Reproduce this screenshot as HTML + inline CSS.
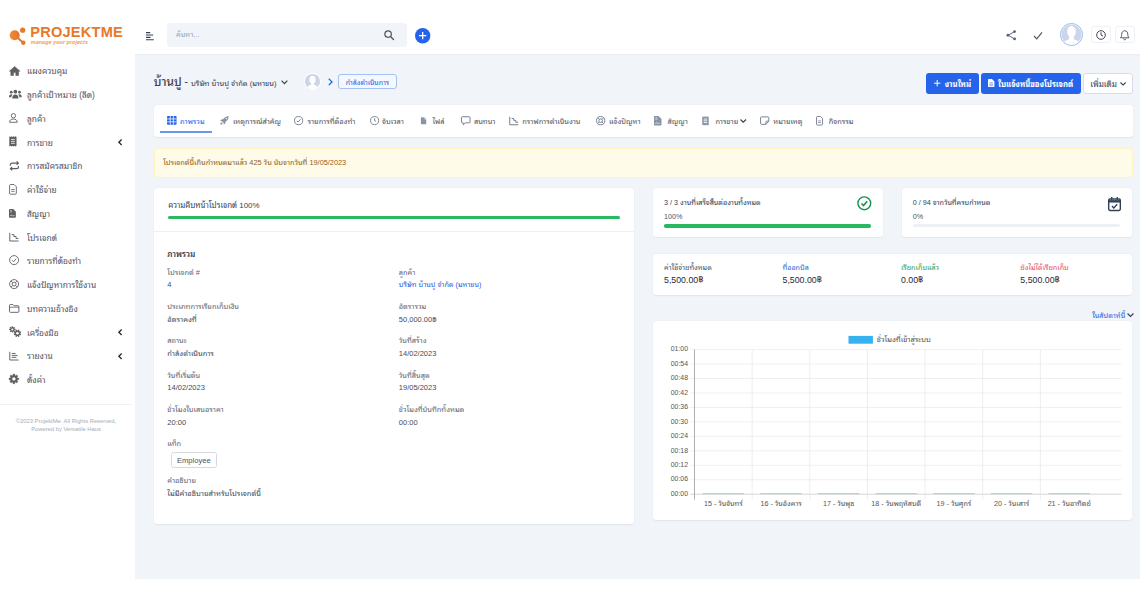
<!DOCTYPE html>
<html lang="th">
<head>
<meta charset="utf-8">
<title>ProjektMe - บ้านปู</title>
<style>
*{box-sizing:border-box;margin:0;padding:0}
html,body{width:1140px;height:597px;overflow:hidden;background:#fff}
body{font-family:"Liberation Sans","Noto Sans Thai Looped","Loma",sans-serif;font-size:7.6px;color:#334155;position:relative;line-height:1}
.abs{position:absolute}
.t{position:absolute;white-space:nowrap;line-height:1;transform:translateY(-50%)}
svg{position:absolute;overflow:visible}
#header{left:135px;top:0;width:1005px;height:54.2px;background:#fff;box-shadow:0 .5px 1.500px rgba(100,116,139,.12)}
#sidebar{left:0;top:0;width:135px;height:597px;background:#fff}
.card{position:absolute;background:#fff;border-radius:3.5px;box-shadow:0 .5px 1.5px rgba(15,23,42,.07)}
.mi{font-size:8.4px;color:#52525b;left:27px}
.lbl{color:#5f6776;font-size:7.4px}
.val{color:#454b57;font-size:7.5px}
.tab{font-size:7.4px;color:#475569}
.ax{font-size:6.9px;color:#555;font-family:"Liberation Sans","Noto Sans Thai Looped","Loma",sans-serif}
</style>
</head>
<body>
<div class="abs" style="left:135px;top:54px;width:1005px;height:524.5px;background:#f1f5f9"></div>
<div id="header" class="abs"></div>
<div id="sidebar" class="abs"></div>

<!-- LOGO -->
<svg style="left:9px;top:26.5px" width="18" height="19" viewBox="0 0 18 19">
  <defs><linearGradient id="lg" x1="0" y1="0" x2="1" y2="0"><stop offset="0" stop-color="#f08c38"/><stop offset="1" stop-color="#e4722a"/></linearGradient></defs>
  <path d="M8.200 10.300L13.600 15.200" stroke="#e8782a" stroke-width="2" stroke-linecap="round"/>
  <circle cx="5.700" cy="8.200" r="5" fill="url(#lg)"/>
  <circle cx="13.700" cy="3.200" r="2.600" fill="#e8782a"/>
  <circle cx="14.300" cy="15.800" r="2.200" fill="#e8782a"/>
</svg>
<div class="t" style="left:30.3px;top:32.100px;font-size:14.6px;font-weight:bold;color:#e8782a;letter-spacing:.2px">PROJEKTME</div>
<div class="t" style="left:30.8px;top:42.800px;font-size:5.5px;font-weight:bold;font-style:italic;color:#f0a060">manage your projects</div>

<!-- SIDEBAR MENU -->
<svg style="left:8.70px;top:65.60px" width="11.37" height="9.80" viewBox="0 0 11.6 10"><path d="M5.800 .5L.3 5.300h1.500v4.400h2.900V6.700h2.200v3h2.900V5.300h1.500z" fill="#5e5e64" stroke="#5e5e64" stroke-width=".5" stroke-linejoin="round"/></svg><div class="t mi" style="top:71.40px">แผงควบคุม</div><svg style="left:8.70px;top:89.35px" width="12.74" height="9.80" viewBox="0 0 13 10"><circle cx="6.500" cy="2.700" r="1.900" fill="#5e5e64"/><circle cx="2.300" cy="3.300" r="1.400" fill="#5e5e64"/><circle cx="10.700" cy="3.300" r="1.400" fill="#5e5e64"/><path d="M3.300 9.700c0-2.600 1.300-4 3.200-4s3.200 1.400 3.200 4z" fill="#5e5e64"/><path d="M0 8.300c0-1.900 .9-3 2.200-3 .6 0 1.100 .2 1.500 .6-.9 .7-1.300 1.500-1.400 2.400z" fill="#5e5e64"/><path d="M13 8.300c0-1.900-.9-3-2.200-3-.6 0-1.100 .2-1.500 .6 .9 .7 1.300 1.500 1.400 2.400z" fill="#5e5e64"/></svg><div class="t mi" style="top:95.15px">ลูกค้าเป้าหมาย (ลีด)</div><svg style="left:9.20px;top:113.10px" width="8.82" height="9.80" viewBox="0 0 9 10"><circle cx="4.500" cy="2.800" r="2.200" fill="none" stroke="#5e5e64" stroke-width=".9"/><path d="M.6 9.500c0-2.300 1.500-3.300 3.900-3.300s3.900 1 3.900 3.300z" fill="none" stroke="#5e5e64" stroke-width=".9" stroke-linejoin="round"/></svg><div class="t mi" style="top:118.90px">ลูกค้า</div><svg style="left:9.30px;top:136.36px" width="7.84" height="10.78" viewBox="0 0 8 11"><path d="M.3 .2l1.050 .8 1.050-.8 1.050 .8L4.500 .2l1.050 .8L6.600 .2l1.100 .8v9l-1.100 .8-1.050-.8-1.050 .8-1.050-.8-1.050 .8-1.050-.8L.3 10.800z" fill="#5e5e64"/><path d="M2 3.500h4M2 5.500h4M2 7.500h4" stroke="#fff" stroke-width=".8"/></svg><div class="t mi" style="top:142.65px">การขาย</div><svg style="left:118.4px;top:139.15px" width="4.400" height="6.600" viewBox="0 0 4 6"><path d="M3.300 .5L.8 3l2.500 2.500" fill="none" stroke="#27272a" stroke-width="1.200"/></svg><svg style="left:8.70px;top:160.60px" width="10.78" height="9.80" viewBox="0 0 11 10"><path d="M1.300 4.800V4.200c0-1.100 .9-2 2-2h6M7.800 .4l1.800 1.800-1.800 1.800" fill="none" stroke="#5e5e64" stroke-width="1.150"/><path d="M9.700 5.200v.6c0 1.100-.9 2-2 2h-6M3.200 9.600L1.400 7.800l1.800-1.800" fill="none" stroke="#5e5e64" stroke-width="1.150"/></svg><div class="t mi" style="top:166.40px">การสมัครสมาชิก</div><svg style="left:9.30px;top:183.86px" width="7.84" height="10.78" viewBox="0 0 8 11"><path d="M1.500 .5h3.700l2.300 2.300v6.700c0 .5-.4 .9-.9 .9H1.500c-.5 0-.9-.4-.9-.9V1.400c0-.5 .4-.9 .9-.9z" fill="none" stroke="#5e5e64" stroke-width=".9"/><path d="M2.400 5.600h3.300M2.400 7.500h3.300" stroke="#5e5e64" stroke-width=".85"/></svg><div class="t mi" style="top:190.15px">ค่าใช้จ่าย</div><svg style="left:9.40px;top:208.59px" width="6.86" height="8.82" viewBox="0 0 7 9"><path d="M.8 0h3.400l2.800 2.800v5.400c0 .4-.4 .8-.8 .8H.8C.4 9 0 8.600 0 8.200V.8C0 .4 .4 0 .8 0z" fill="#5e5e64"/><path d="M1.300 1.700h1.800M1.300 3h1.800" stroke="#fff" stroke-width=".6"/><path d="M1.300 7.200c.7-1.500 1.100-1.500 1.500-.4 .3 .7 .7 .4 1.100 0l1.700 0" fill="none" stroke="#fff" stroke-width=".6"/></svg><div class="t mi" style="top:213.90px">สัญญา</div><svg style="left:8.70px;top:231.85px" width="9.80" height="9.80" viewBox="0 0 10 10"><path d="M.8 .8v8.400h9" fill="none" stroke="#5e5e64" stroke-width=".95"/><path d="M2.800 2.600h2.200v2h2.200v2h2.400" fill="none" stroke="#5e5e64" stroke-width=".95"/></svg><div class="t mi" style="top:237.65px">โปรเจกต์</div><svg style="left:8.70px;top:255.40px" width="10.19" height="10.19" viewBox="0 0 10.4 10.4"><circle cx="5.200" cy="5.200" r="4.600" fill="none" stroke="#5e5e64" stroke-width=".9"/><path d="M3.100 5.400l1.500 1.500 2.800-3.200" fill="none" stroke="#5e5e64" stroke-width=".9"/></svg><div class="t mi" style="top:261.40px">รายการที่ต้องทำ</div><svg style="left:8.70px;top:279.15px" width="10.19" height="10.19" viewBox="0 0 10.4 10.4"><circle cx="5.200" cy="5.200" r="4.600" fill="none" stroke="#5e5e64" stroke-width=".9"/><circle cx="5.200" cy="5.200" r="2" fill="none" stroke="#5e5e64" stroke-width=".9"/><path d="M2 2l1.800 1.800M8.400 2L6.600 3.800M2 8.400l1.800-1.800M8.400 8.400L6.600 6.600" stroke="#5e5e64" stroke-width=".9"/></svg><div class="t mi" style="top:285.15px">แจ้งปัญหาการใช้งาน</div><svg style="left:8.70px;top:303.59px" width="10.39" height="8.82" viewBox="0 0 10.6 9"><path d="M.5 1.300c0-.4 .4-.8 .8-.8h2.600l1.200 1.300h4.200c.4 0 .8 .4 .8 .8v5.100c0 .4-.4 .8-.8 .8H1.300c-.4 0-.8-.4-.8-.8z" fill="none" stroke="#5e5e64" stroke-width=".95"/><path d="M.5 3.300h9.600" stroke="#5e5e64" stroke-width=".8"/></svg><div class="t mi" style="top:308.90px">บทความอ้างอิง</div><svg style="left:8.70px;top:326.16px" width="12.25" height="11.17" viewBox="0 0 12.5 11.4"><path d="M2.74 1.24L2.83 0.25L3.97 0.25L4.06 1.24L4.53 1.44L5.30 0.80L6.10 1.60L5.46 2.37L5.66 2.84L6.65 2.93L6.65 4.07L5.66 4.16L5.46 4.63L6.10 5.40L5.30 6.20L4.53 5.56L4.06 5.76L3.97 6.75L2.83 6.75L2.74 5.76L2.27 5.56L1.50 6.20L0.70 5.40L1.34 4.63L1.14 4.16L0.15 4.07L0.15 2.93L1.14 2.84L1.34 2.37L0.70 1.60L1.50 0.80L2.27 1.44z" fill="#5e5e64"/><path d="M8.91 4.57L9.45 3.59L10.69 4.11L10.38 5.18L10.82 5.62L11.89 5.31L12.41 6.55L11.43 7.09L11.43 7.71L12.41 8.25L11.89 9.49L10.82 9.18L10.38 9.62L10.69 10.69L9.45 11.21L8.91 10.23L8.29 10.23L7.75 11.21L6.51 10.69L6.82 9.62L6.38 9.18L5.31 9.49L4.79 8.25L5.77 7.71L5.77 7.09L4.79 6.55L5.31 5.31L6.38 5.62L6.82 5.18L6.51 4.11L7.75 3.59L8.29 4.57z" fill="#5e5e64"/><circle cx="3.400" cy="3.500" r="1.050" fill="#fff"/><circle cx="8.600" cy="7.400" r="1.350" fill="#fff"/></svg><div class="t mi" style="top:332.65px">เครื่องมือ</div><svg style="left:118.4px;top:329.15px" width="4.400" height="6.600" viewBox="0 0 4 6"><path d="M3.300 .5L.8 3l2.500 2.500" fill="none" stroke="#27272a" stroke-width="1.200"/></svg><svg style="left:8.70px;top:350.60px" width="9.80" height="9.80" viewBox="0 0 10 10"><path d="M.8 .8v8.400h9" fill="none" stroke="#5e5e64" stroke-width=".95"/><path d="M2.800 2.500h4M2.800 4.500h6M2.800 6.500h4.800" stroke="#5e5e64" stroke-width=".95"/></svg><div class="t mi" style="top:356.40px">รายงาน</div><svg style="left:118.4px;top:352.90px" width="4.400" height="6.600" viewBox="0 0 4 6"><path d="M3.300 .5L.8 3l2.500 2.500" fill="none" stroke="#27272a" stroke-width="1.200"/></svg><svg style="left:8.70px;top:374.35px" width="9.80" height="9.80" viewBox="0 0 10 10"><path d="M3.97 1.45L4.14 0.07L5.86 0.07L6.03 1.45L6.78 1.76L7.88 0.91L9.09 2.12L8.24 3.22L8.55 3.97L9.93 4.14L9.93 5.86L8.55 6.03L8.24 6.78L9.09 7.88L7.88 9.09L6.78 8.24L6.03 8.55L5.86 9.93L4.14 9.93L3.97 8.55L3.22 8.24L2.12 9.09L0.91 7.88L1.76 6.78L1.45 6.03L0.07 5.86L0.07 4.14L1.45 3.97L1.76 3.22L0.91 2.12L2.12 0.91L3.22 1.76z" fill="#5e5e64" stroke="#5e5e64" stroke-width=".4" stroke-linejoin="round"/><circle cx="5" cy="5" r="1.700" fill="#fff"/></svg><div class="t mi" style="top:380.15px">ตั้งค่า</div>
<div class="abs" style="left:0;top:403.5px;width:131px;height:1px;background:#eef1f5"></div>
<div class="t" style="left:0;width:132px;text-align:center;top:421.800px;font-size:5.8px;color:#a3adba">©2023 ProjektMe. All Rights Reserved,</div>
<div class="t" style="left:0;width:132px;text-align:center;top:430.100px;font-size:5.8px;color:#a3adba">Powered by Versatile Haus</div>

<!-- TOP BAR -->
<svg style="left:146px;top:32px" width="8" height="8.4" viewBox="0 0 8 8.4">
  <path d="M0 .6h4.200M0 3h7.200M0 5.400h4.600M0 7.800h7.800" stroke="#334155" stroke-width="1.100" fill="none"/>
</svg>
<div class="abs" style="left:167px;top:22.8px;width:240px;height:24px;background:#f1f5f9;border-radius:3.5px"></div>
<div class="t" style="left:176px;top:35px;font-size:7.4px;color:#94a3b8">ค้นหา...</div>
<svg style="left:384px;top:30px" width="10.200" height="10.200" viewBox="0 0 10.2 10.200">
  <circle cx="4.100" cy="4.100" r="3.250" fill="none" stroke="#4b5563" stroke-width="1.200"/>
  <path d="M6.500 6.500L9.500 9.500" stroke="#4b5563" stroke-width="1.300" stroke-linecap="round"/>
</svg>
<svg style="left:414.7px;top:28px" width="15.400" height="15.400" viewBox="0 0 15.4 15.400">
  <circle cx="7.700" cy="7.700" r="7.700" fill="#2563eb"/>
  <path d="M7.700 4.100v7.200M4.100 7.700h7.200" stroke="#fff" stroke-width="1.250"/>
</svg>
<svg style="left:1005.5px;top:29.800px" width="10.500" height="10.500" viewBox="0 0 10.5 10.500">
  <path d="M8.400 1.700L2.100 5.250L8.400 8.800" fill="none" stroke="#5b6472" stroke-width=".95"/>
  <circle cx="8.600" cy="1.600" r="1.400" fill="#5b6472"/>
  <circle cx="1.900" cy="5.250" r="1.400" fill="#5b6472"/>
  <circle cx="8.600" cy="8.900" r="1.400" fill="#5b6472"/>
</svg>
<svg style="left:1033px;top:30.5px" width="10" height="9" viewBox="0 0 10 9">
  <path d="M1 5L3.800 7.800L9 1.400" fill="none" stroke="#4b5563" stroke-width="1.150"/>
</svg>
<svg style="left:1059.5px;top:23.2px" width="23" height="23" viewBox="0 0 23 23">
  <defs><clipPath id="avc"><circle cx="11.500" cy="11.500" r="10.200"/></clipPath></defs>
  <circle cx="11.500" cy="11.500" r="11" fill="#fff" stroke="#7aa7f0" stroke-width=".8"/>
  <circle cx="11.500" cy="11.500" r="10" fill="#cdd5e6"/>
  <g clip-path="url(#avc)" fill="#fff">
    <ellipse cx="11.500" cy="8.600" rx="4.300" ry="5.700"/>
    <path d="M2.500 23c0-4.200 2.800-5.500 6.400-6.400l.4-3h4.400l.4 3c3.600 .9 6.400 2.200 6.400 6.400z"/>
  </g>
</svg>
<div class="abs" style="left:1091.3px;top:25.700px;width:20px;height:17.800px;border:.7px solid #edf0f4;border-radius:3px;background:#fff"></div>
<svg style="left:1096px;top:29.700px" width="10" height="10" viewBox="0 0 10 10">
  <circle cx="5" cy="5" r="4.300" fill="none" stroke="#3f4754" stroke-width="1"/>
  <path d="M5 2.300V5l2 1.100" fill="none" stroke="#3f4754" stroke-width="1"/>
</svg>
<div class="abs" style="left:1114.7px;top:25.700px;width:20px;height:17.800px;border:.7px solid #edf0f4;border-radius:3px;background:#fff"></div>
<svg style="left:1120.3px;top:29.600px" width="9.5" height="11" viewBox="0 0 9.5 11">
  <path d="M4.750 .8C2.700 .8 1.700 2.300 1.700 4.200c0 2-.6 2.900-1.200 3.600h8.500c-.6-.7-1.200-1.600-1.200-3.600C7.800 2.300 6.800 .8 4.750 .8z" fill="none" stroke="#334155" stroke-width=".85" stroke-linejoin="round"/>
  <path d="M3.600 8.600c.2 .9 .7 1.300 1.150 1.300s.95-.4 1.150-1.300" fill="none" stroke="#334155" stroke-width=".85"/>
</svg>

<!-- PAGE TITLE ROW -->
<div class="t" style="left:153.7px;top:82.900px;font-size:11.8px;font-weight:500;color:#3b4250">บ้านปู</div><div class="t" style="left:184.2px;top:82px;font-size:11.500px;color:#3b4250">-</div><div class="t" style="left:191px;top:83.600px;font-size:7.5px;color:#334155">บริษัท บ้านปู จำกัด (มหาชน)</div><svg style="left:281.3px;top:80.400px" width="6.900" height="4.600" viewBox="0 0 6 4"><path d="M.5 .6L3 3.100 5.500 .6" fill="none" stroke="#3f3f46" stroke-width="1.050"/></svg><svg style="left:303.6px;top:73.300px" width="17" height="17" viewBox="0 0 23 23">
  <defs><clipPath id="avc2"><circle cx="11.500" cy="11.500" r="10.500"/></clipPath></defs>
  <circle cx="11.500" cy="11.500" r="11.500" fill="#fff"/>
  <circle cx="11.500" cy="11.500" r="10.300" fill="#cbd5e6"/>
  <g clip-path="url(#avc2)" fill="#fff">
    <ellipse cx="11.500" cy="9" rx="4.200" ry="5.200"/>
    <path d="M3.500 23c0-5 3-6.500 6-7.200v-2h4v2c3 .7 6 2.200 6 7.200z"/>
  </g>
</svg><svg style="left:327.6px;top:78.300px" width="5" height="7.800" viewBox="0 0 4.5 7"><path d="M.7 .6L3.600 3.500 .7 6.400" fill="none" stroke="#2563eb" stroke-width="1.200"/></svg><div class="abs" style="left:338px;top:74.300px;width:58.8px;height:15px;border:.7px solid #a5c0f5;border-radius:3px;background:#f4f8ff"></div><div class="t" style="left:338px;width:58.8px;text-align:center;top:82.300px;font-size:7px;color:#2f5fe0">กำลังดำเนินการ</div><div class="abs" style="left:926px;top:73.4px;width:53px;height:20.200px;background:#2563eb;border-radius:3px"></div><svg style="left:933.6px;top:80.3px" width="6.400" height="6.400" viewBox="0 0 6.4 6.4"><path d="M3.200 0v6.400M0 3.200h6.400" stroke="#fff" stroke-width="1"/></svg><div class="t" style="left:944.7px;top:84.700px;font-size:7.9px;font-weight:bold;color:#fff">งานใหม่</div><div class="abs" style="left:981px;top:73.4px;width:99.7px;height:20.200px;background:#2563eb;border-radius:3px"></div><svg style="left:988.2px;top:79.300px" width="6.400" height="8.200" viewBox="0 0 6.2 7.8"><path d="M.7 0h3.100l2.400 2.400v4.800c0 .3-.3 .6-.7 .6H.7c-.4 0-.7-.3-.7-.6V.6C0 .3 .3 0 .7 0z" fill="#fff"/><path d="M1.300 3.600h3.600M1.300 5h3.600M1.300 6.400h3.600" stroke="#2563eb" stroke-width=".5"/></svg><div class="t" style="left:998px;top:84.700px;font-size:7.75px;font-weight:bold;color:#fff">ใบแจ้งหนี้ของโปรเจกต์</div><div class="abs" style="left:1083px;top:73.4px;width:49.5px;height:20.200px;background:#fff;border:.6px solid #d9dee6;border-radius:3px"></div><div class="t" style="left:1090.3px;top:84.600px;font-size:8.2px;color:#334155">เพิ่มเติม</div><svg style="left:1120px;top:81.7px" width="6.200" height="4" viewBox="0 0 6.2 4"><path d="M.5 .5L3.100 3.100 5.700 .5" fill="none" stroke="#334155" stroke-width="1.100"/></svg>
<!-- TABS -->
<div class="card" style="left:153.5px;top:105px;width:979px;height:32px"></div><div class="abs" style="left:160px;top:131.200px;width:51.800px;height:1.400px;background:#6f96ec"></div><svg style="left:167.00px;top:116.02px" width="9.60" height="8.77" viewBox="0 0 9.2 8.4"><rect x="0" y="0" width="9.200" height="8.400" rx="1" fill="#2563eb"/><path d="M0 2.800h9.200M0 5.600h9.200M3.100 0v8.400M6.100 0v8.400" stroke="#fff" stroke-width=".75"/></svg><div class="t tab" style="left:180.0px;top:122px;color:#2563eb">ภาพรวม</div><svg style="left:220.00px;top:116.00px" width="8.80" height="8.80" viewBox="0 0 10 10"><path d="M9.800 .2c-3-.2-5 1.300-6.300 3.600l-2 .2-1.300 1.700 2 .3 1.800 1.800 .3 2 1.700-1.300 .2-2c2.300-1.300 3.800-3.300 3.600-6.300z" fill="#8a93a4"/><circle cx="7.200" cy="2.800" r=".8" fill="#fff"/><path d="M1.600 7c-.9 .3-1.300 1.500-1.400 2.800 1.300-.1 2.500-.5 2.800-1.400z" fill="#8a93a4"/></svg><div class="t tab" style="left:233.0px;top:122px;color:#52525b">เหตุการณ์สำคัญ</div><svg style="left:294.30px;top:115.80px" width="9.20" height="9.20" viewBox="0 0 10.4 10.4"><circle cx="5.200" cy="5.200" r="4.600" fill="none" stroke="#737c8c" stroke-width="1.050"/><path d="M3.100 5.400l1.500 1.500 2.800-3.200" fill="none" stroke="#737c8c" stroke-width="1.050"/></svg><div class="t tab" style="left:307.5px;top:122px;color:#52525b">รายการที่ต้องทำ</div><svg style="left:369.50px;top:115.80px" width="9.20" height="9.20" viewBox="0 0 10 10"><circle cx="5" cy="5" r="4.400" fill="none" stroke="#737c8c" stroke-width="1"/><path d="M5 2.400V5l1.700 1" fill="none" stroke="#737c8c" stroke-width="1"/></svg><div class="t tab" style="left:382.0px;top:122px;color:#52525b">จับเวลา</div><svg style="left:420.00px;top:116.65px" width="7.50" height="7.50" viewBox="0 0 10 10"><path d="M1.800 .3h3.700l2.800 2.800v6c0 .3-.3 .6-.6 .6H1.800c-.3 0-.6-.3-.6-.6V.9c0-.3 .3-.6 .6-.6z" fill="#8a93a4"/><path d="M5.500 .3v2.800h2.800" fill="none" stroke="#fff" stroke-width=".5"/></svg><div class="t tab" style="left:432.6px;top:122px;color:#52525b">ไฟล์</div><svg style="left:460.50px;top:115.65px" width="9.50" height="9.50" viewBox="0 0 10 10"><path d="M1.300 .8h7.400c.4 0 .8 .4 .8 .8v4.800c0 .4-.4 .8-.8 .8H4.600L2.400 9.200v-2H1.300c-.4 0-.8-.4-.8-.8V1.600c0-.4 .4-.8 .8-.8z" fill="none" stroke="#737c8c" stroke-width="1" stroke-linejoin="round"/></svg><div class="t tab" style="left:474.0px;top:122px;color:#52525b">สนทนา</div><svg style="left:508.80px;top:115.65px" width="9.50" height="9.50" viewBox="0 0 10 10"><path d="M.8 .8v8.400h9" fill="none" stroke="#737c8c" stroke-width="1.050"/><path d="M2.800 2.600h2.200v2h2.200v2h2.400" fill="none" stroke="#737c8c" stroke-width="1.050"/></svg><div class="t tab" style="left:522.3px;top:122px;color:#52525b">กราฟการดำเนินงาน</div><svg style="left:595.70px;top:115.75px" width="9.30" height="9.30" viewBox="0 0 10.4 10.4"><circle cx="5.200" cy="5.200" r="4.600" fill="none" stroke="#737c8c" stroke-width="1.050"/><circle cx="5.200" cy="5.200" r="2" fill="none" stroke="#737c8c" stroke-width="1.050"/><path d="M2 2l1.800 1.800M8.400 2L6.600 3.800M2 8.400l1.800-1.800M8.400 8.400L6.600 6.600" stroke="#737c8c" stroke-width="1.050"/></svg><div class="t tab" style="left:609.0px;top:122px;color:#52525b">แจ้งปัญหา</div><svg style="left:654.47px;top:115.60px" width="7.47" height="9.60" viewBox="0 0 7 9"><path d="M.8 0h3.400l2.800 2.800v5.400c0 .4-.4 .8-.8 .8H.8C.4 9 0 8.600 0 8.200V.8C0 .4 .4 0 .8 0z" fill="#8a93a4"/><path d="M1.300 1.700h1.800M1.300 3h1.800" stroke="#fff" stroke-width=".6"/><path d="M1.300 7.200c.7-1.500 1.100-1.500 1.500-.4 .3 .7 .7 .4 1.100 0l1.700 0" fill="none" stroke="#fff" stroke-width=".6"/></svg><div class="t tab" style="left:667.5px;top:122px;color:#52525b">สัญญา</div><svg style="left:701.76px;top:115.60px" width="6.98" height="9.60" viewBox="0 0 8 11"><path d="M.3 .2l1.050 .8 1.050-.8 1.050 .8L4.500 .2l1.050 .8L6.600 .2l1.100 .8v9l-1.100 .8-1.050-.8-1.050 .8-1.050-.8-1.050 .8-1.050-.8L.3 10.800z" fill="#8a93a4"/><path d="M2 3.500h4M2 5.500h4M2 7.500h4" stroke="#fff" stroke-width="1"/></svg><div class="t tab" style="left:715.4px;top:122px;color:#52525b">การขาย</div><svg style="left:759.80px;top:115.70px" width="9.40" height="9.40" viewBox="0 0 10 10"><path d="M1.500 .9h7c.5 0 .9 .4 .9 .9v3.700L6.300 8.900H1.500c-.5 0-.9-.4-.9-.9V1.800c0-.5 .4-.9 .9-.9z" fill="none" stroke="#737c8c" stroke-width="1"/><path d="M9.400 5.500H6.900c-.3 0-.6 .3-.6 .6v2.800" fill="none" stroke="#737c8c" stroke-width="1"/></svg><div class="t tab" style="left:773.3px;top:122px;color:#52525b">หมายเหตุ</div><svg style="left:815.71px;top:115.60px" width="6.98" height="9.60" viewBox="0 0 8 11"><path d="M1.500 .5h3.700l2.300 2.300v6.700c0 .5-.4 .9-.9 .9H1.500c-.5 0-.9-.4-.9-.9V1.400c0-.5 .4-.9 .9-.9z" fill="none" stroke="#737c8c" stroke-width="1.050"/><path d="M2.400 5.600h3.300M2.400 7.500h3.300" stroke="#737c8c" stroke-width=".85"/></svg><div class="t tab" style="left:828.8px;top:122px;color:#52525b">กิจกรรม</div><svg style="left:739.8px;top:119.300px" width="6.500" height="4.200" viewBox="0 0 5.6 3.6"><path d="M.4 .4L2.800 2.800 5.200 .4" fill="none" stroke="#3f3f46" stroke-width="1"/></svg>
<!-- ALERT -->
<div class="abs" style="left:153.5px;top:148px;width:979px;height:30px;background:#fefbe8;border:.6px solid #fdf3c4;border-radius:3.5px"></div><div class="t" style="left:163.2px;top:163.400px;font-size:7.35px;color:#94601a">โปรเจกต์นี้เกินกำหนดมาแล้ว 425 วัน นับจากวันที่ 19/05/2023</div>
<!-- PROJECT OVERVIEW CARD -->
<div class="card" style="left:153.5px;top:187.700px;width:480px;height:336.300px"></div><div class="t" style="left:168.3px;top:206.300px;font-size:7.9px;color:#334155">ความคืบหน้าโปรเจกต์ 100%</div><div class="abs" style="left:168px;top:215.700px;width:451.500px;height:3.400px;background:#26b95d;border-radius:1.700px"></div><div class="abs" style="left:153.5px;top:231px;width:480px;height:.7px;background:#edf0f4"></div><div class="t" style="left:167.3px;top:255px;font-size:8.2px;font-weight:600;color:#334155">ภาพรวม</div><div class="t lbl" style="left:167.3px;top:272.6px">โปรเจกต์ #</div><div class="t val" style="left:167.3px;top:285.2px">4</div><div class="t lbl" style="left:398.8px;top:272.6px">ลูกค้า</div><div class="t val" style="left:398.8px;top:285.2px;color:#2f5fe0;font-size:7.250px">บริษัท บ้านปู จำกัด (มหาชน)</div><div class="t lbl" style="left:167.3px;top:307.0px">ประเภทการเรียกเก็บเงิน</div><div class="t val" style="left:167.3px;top:319.6px">อัตราคงที่</div><div class="t lbl" style="left:398.8px;top:307.0px">อัตรารวม</div><div class="t val" style="left:398.8px;top:319.6px">50,000.00฿</div><div class="t lbl" style="left:167.3px;top:341.3px">สถานะ</div><div class="t val" style="left:167.3px;top:353.9px">กำลังดำเนินการ</div><div class="t lbl" style="left:398.8px;top:341.3px">วันที่สร้าง</div><div class="t val" style="left:398.8px;top:353.9px">14/02/2023</div><div class="t lbl" style="left:167.3px;top:375.6px">วันที่เริ่มต้น</div><div class="t val" style="left:167.3px;top:388.2px">14/02/2023</div><div class="t lbl" style="left:398.8px;top:375.6px">วันที่สิ้นสุด</div><div class="t val" style="left:398.8px;top:388.2px">19/05/2023</div><div class="t lbl" style="left:167.3px;top:410.0px">ชั่วโมงใบเสนอราคา</div><div class="t val" style="left:167.3px;top:422.6px">20:00</div><div class="t lbl" style="left:398.8px;top:410.0px">ชั่วโมงที่บันทึกทั้งหมด</div><div class="t val" style="left:398.8px;top:422.6px">00:00</div><div class="t lbl" style="left:167.3px;top:444px">แท็ก</div><div class="abs" style="left:170.7px;top:452.200px;width:46.200px;height:16px;border:.6px solid #d5dae2;border-radius:2.500px;background:#fff"></div><div class="t" style="left:170.7px;width:46.200px;text-align:center;top:460.500px;font-size:7.600px;color:#475569">Employee</div><div class="t lbl" style="left:167.3px;top:481.200px">คำอธิบาย</div><div class="t val" style="left:167.3px;top:493.700px">ไม่มีคำอธิบายสำหรับโปรเจกต์นี้</div>
<!-- TASK / DAYS CARDS -->
<div class="card" style="left:652.9px;top:187.700px;width:229.700px;height:49.300px"></div><div class="t" style="left:664px;top:203px;font-size:7.2px;color:#334155">3 / 3 งานที่เสร็จสิ้นต่องานทั้งหมด</div><div class="t" style="left:664px;top:217px;font-size:7.2px;color:#475569">100%</div><div class="abs" style="left:664px;top:224.300px;width:207px;height:3.500px;background:#26b95d;border-radius:1.750px"></div><svg style="left:857px;top:196.300px" width="14.600" height="14.600" viewBox="0 0 13 13"><circle cx="6.500" cy="6.500" r="5.700" fill="none" stroke="#15914a" stroke-width="1.250"/><path d="M4 6.700l1.800 1.800 3.300-3.800" fill="none" stroke="#15914a" stroke-width="1.350"/></svg><div class="card" style="left:902.2px;top:187.700px;width:229.800px;height:49.300px"></div><div class="t" style="left:912.8px;top:203px;font-size:7.2px;color:#334155">0 / 94 จากวันที่ครบกำหนด</div><div class="t" style="left:912.8px;top:217px;font-size:7.2px;color:#475569">0%</div><div class="abs" style="left:912.8px;top:224.300px;width:207.200px;height:3.200px;background:#edf1f6;border-radius:1.600px"></div><svg style="left:1107.8px;top:197px" width="13" height="14.200" viewBox="0 0 11.5 12.5"><rect x=".6" y="1.700" width="10.300" height="10.200" rx="1.200" fill="none" stroke="#334155" stroke-width="1.250"/><path d="M.6 3.800h10.300" stroke="#334155" stroke-width="2.200"/><path d="M3.300 0v2.400M8.200 0v2.400" stroke="#334155" stroke-width="1.200"/><path d="M3.500 8l1.600 1.600 3-3.200" fill="none" stroke="#334155" stroke-width="1.250"/></svg>
<!-- EXPENSES CARD -->
<div class="card" style="left:652.9px;top:253.500px;width:479.100px;height:41.500px"></div><div class="t" style="left:664.0px;top:268.400px;font-size:7.2px;color:#475569">ค่าใช้จ่ายทั้งหมด</div><div class="t" style="left:664.0px;top:279.800px;font-size:8.8px;color:#1e293b">5,500.00฿</div><div class="t" style="left:782.5px;top:268.400px;font-size:7.2px;color:#2f6ad9">ที่ออกบิล</div><div class="t" style="left:782.5px;top:279.800px;font-size:8.8px;color:#1e293b">5,500.00฿</div><div class="t" style="left:901.0px;top:268.400px;font-size:7.2px;color:#3a9e4f">เรียกเก็บแล้ว</div><div class="t" style="left:901.0px;top:279.800px;font-size:8.8px;color:#1e293b">0.00฿</div><div class="t" style="left:1020.3px;top:268.400px;font-size:7.2px;color:#e8505e">ยังไม่ได้เรียกเก็บ</div><div class="t" style="left:1020.3px;top:279.800px;font-size:8.8px;color:#1e293b">5,500.00฿</div><div class="t" style="right:14.8px;top:315.600px;font-size:7.3px;color:#2f5fe0">ในสัปดาห์นี้</div><svg style="left:1126.7px;top:313.300px" width="7" height="4.600" viewBox="0 0 5.4 3.6"><path d="M.4 .4L2.700 2.700 5 .4" fill="none" stroke="#334155" stroke-width=".95"/></svg>
<!-- CHART -->
<div class="card" style="left:652.9px;top:321px;width:479.100px;height:198.600px"></div><svg style="left:0;top:0" width="1140" height="597" viewBox="0 0 1140 597">
<rect x="848.5" y="335.900" width="24.400" height="7.800" fill="#36b3ee"/>
<text x="876.8" y="342.300" font-size="7.450" fill="#555" font-family="'Liberation Sans','Noto Sans Thai Looped','Loma',sans-serif">ชั่วโมงที่เข้าสู่ระบบ</text>
<path d="M690.0 349.60H1121.600" stroke="#e6e6e6" stroke-width=".6"/>
<text x="688" y="351.30" text-anchor="end" font-size="6.900" fill="#555" font-family="'Liberation Sans',sans-serif">01:00</text>
<path d="M690.0 364.06H1121.600" stroke="#e6e6e6" stroke-width=".6"/>
<text x="688" y="365.76" text-anchor="end" font-size="6.900" fill="#555" font-family="'Liberation Sans',sans-serif">00:54</text>
<path d="M690.0 378.52H1121.600" stroke="#e6e6e6" stroke-width=".6"/>
<text x="688" y="380.22" text-anchor="end" font-size="6.900" fill="#555" font-family="'Liberation Sans',sans-serif">00:48</text>
<path d="M690.0 392.98H1121.600" stroke="#e6e6e6" stroke-width=".6"/>
<text x="688" y="394.68" text-anchor="end" font-size="6.900" fill="#555" font-family="'Liberation Sans',sans-serif">00:42</text>
<path d="M690.0 407.44H1121.600" stroke="#e6e6e6" stroke-width=".6"/>
<text x="688" y="409.14" text-anchor="end" font-size="6.900" fill="#555" font-family="'Liberation Sans',sans-serif">00:36</text>
<path d="M690.0 421.90H1121.600" stroke="#e6e6e6" stroke-width=".6"/>
<text x="688" y="423.60" text-anchor="end" font-size="6.900" fill="#555" font-family="'Liberation Sans',sans-serif">00:30</text>
<path d="M690.0 436.36H1121.600" stroke="#e6e6e6" stroke-width=".6"/>
<text x="688" y="438.06" text-anchor="end" font-size="6.900" fill="#555" font-family="'Liberation Sans',sans-serif">00:24</text>
<path d="M690.0 450.82H1121.600" stroke="#e6e6e6" stroke-width=".6"/>
<text x="688" y="452.52" text-anchor="end" font-size="6.900" fill="#555" font-family="'Liberation Sans',sans-serif">00:18</text>
<path d="M690.0 465.28H1121.600" stroke="#e6e6e6" stroke-width=".6"/>
<text x="688" y="466.98" text-anchor="end" font-size="6.900" fill="#555" font-family="'Liberation Sans',sans-serif">00:12</text>
<path d="M690.0 479.74H1121.600" stroke="#e6e6e6" stroke-width=".6"/>
<text x="688" y="481.44" text-anchor="end" font-size="6.900" fill="#555" font-family="'Liberation Sans',sans-serif">00:06</text>
<path d="M690.0 494.20H1121.600" stroke="#b8b8b8" stroke-width=".6"/>
<text x="688" y="495.90" text-anchor="end" font-size="6.900" fill="#555" font-family="'Liberation Sans',sans-serif">00:00</text>
<path d="M694.50 349.6V499.6" stroke="#8c8c8c" stroke-width=".7"/>
<path d="M752.15 349.6V499.6" stroke="#e0e0e0" stroke-width=".6"/>
<path d="M809.80 349.6V499.6" stroke="#e0e0e0" stroke-width=".6"/>
<path d="M867.45 349.6V499.6" stroke="#e0e0e0" stroke-width=".6"/>
<path d="M925.10 349.6V499.6" stroke="#e0e0e0" stroke-width=".6"/>
<path d="M982.75 349.6V499.6" stroke="#e0e0e0" stroke-width=".6"/>
<path d="M1040.40 349.6V499.6" stroke="#e0e0e0" stroke-width=".6"/>
<rect x="702.58" y="493.30" width="41.500" height=".8" fill="#86ccf0"/>
<text x="723.33" y="505.900" text-anchor="middle" font-size="7.200" fill="#555" font-family="'Liberation Sans','Noto Sans Thai Looped','Loma',sans-serif">15 - วันจันทร์</text>
<rect x="760.23" y="493.30" width="41.500" height=".8" fill="#86ccf0"/>
<text x="780.98" y="505.900" text-anchor="middle" font-size="7.200" fill="#555" font-family="'Liberation Sans','Noto Sans Thai Looped','Loma',sans-serif">16 - วันอังคาร</text>
<rect x="817.88" y="493.30" width="41.500" height=".8" fill="#86ccf0"/>
<text x="838.62" y="505.900" text-anchor="middle" font-size="7.200" fill="#555" font-family="'Liberation Sans','Noto Sans Thai Looped','Loma',sans-serif">17 - วันพุธ</text>
<rect x="875.52" y="493.30" width="41.500" height=".8" fill="#86ccf0"/>
<text x="896.27" y="505.900" text-anchor="middle" font-size="7.200" fill="#555" font-family="'Liberation Sans','Noto Sans Thai Looped','Loma',sans-serif">18 - วันพฤหัสบดี</text>
<rect x="933.17" y="493.30" width="41.500" height=".8" fill="#86ccf0"/>
<text x="953.92" y="505.900" text-anchor="middle" font-size="7.200" fill="#555" font-family="'Liberation Sans','Noto Sans Thai Looped','Loma',sans-serif">19 - วันศุกร์</text>
<rect x="990.83" y="493.30" width="41.500" height=".8" fill="#86ccf0"/>
<text x="1011.58" y="505.900" text-anchor="middle" font-size="7.200" fill="#555" font-family="'Liberation Sans','Noto Sans Thai Looped','Loma',sans-serif">20 - วันเสาร์</text>
<rect x="1048.47" y="493.30" width="41.500" height=".8" fill="#86ccf0"/>
<text x="1069.22" y="505.900" text-anchor="middle" font-size="7.200" fill="#555" font-family="'Liberation Sans','Noto Sans Thai Looped','Loma',sans-serif">21 - วันอาทิตย์</text>
</svg>
</body>
</html>
